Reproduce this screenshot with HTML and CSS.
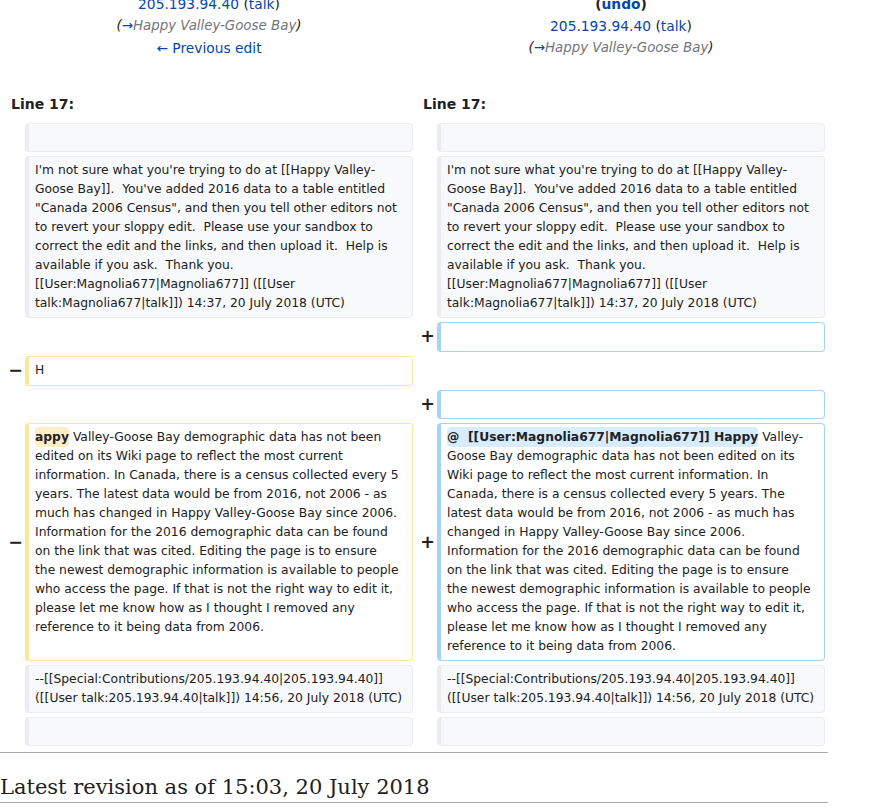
FILE: index.html
```html
<!DOCTYPE html>
<html lang="en">
<head>
<meta charset="utf-8">
<title>Diff</title>
<link rel="stylesheet" href="styles.css">
</head>
<body>
<div class="page">
  <div class="diff">
    <div class="title">
      <div class="tline"><strong><a class="lnk">Revision as of 14:56, 20 July 2018</a> (<a class="lnk">edit</a>)</strong></div>
      <div class="tline"><a class="lnk">205.193.94.40</a> (<a class="lnk">talk</a>)</div>
      <div class="tline comment">(<a class="lnk">→</a><span class="auto">Happy Valley-Goose Bay</span>)</div>
      <div class="tline"><a class="lnk">← Previous edit</a></div>
    </div>
    <div class="title">
      <div class="tline"><strong><a class="lnk">Latest revision as of 15:03, 20 July 2018</a> (<a class="lnk">edit</a>)</strong></div>
      <div class="tline"><strong>(<a class="lnk">undo</a>)</strong></div>
      <div class="tline"><a class="lnk">205.193.94.40</a> (<a class="lnk">talk</a>)</div>
      <div class="tline comment">(<a class="lnk">→</a><span class="auto">Happy Valley-Goose Bay</span>)</div>
      <div class="tline">&nbsp;</div>
    </div>

    <div class="lineno">Line 17:</div>
    <div class="lineno">Line 17:</div>

    <div class="marker"></div>
    <div class="cell ctx"><br></div>
    <div class="marker"></div>
    <div class="cell ctx"><br></div>

    <div class="marker"></div>
    <div class="cell ctx">I'm not sure what you're trying to do at [[Happy Valley-Goose Bay]].  You've added 2016 data to a table entitled "Canada 2006 Census", and then you tell other editors not to revert your sloppy edit.  Please use your sandbox to correct the edit and the links, and then upload it.  Help is available if you ask.  Thank you. [[User:Magnolia677|Magnolia677]] ([[User talk:Magnolia677|talk]]) 14:37, 20 July 2018 (UTC)</div>
    <div class="marker"></div>
    <div class="cell ctx">I'm not sure what you're trying to do at [[Happy Valley-Goose Bay]].  You've added 2016 data to a table entitled "Canada 2006 Census", and then you tell other editors not to revert your sloppy edit.  Please use your sandbox to correct the edit and the links, and then upload it.  Help is available if you ask.  Thank you. [[User:Magnolia677|Magnolia677]] ([[User talk:Magnolia677|talk]]) 14:37, 20 July 2018 (UTC)</div>

    <div class="marker"></div>
    <div class="empty"></div>
    <div class="marker">+</div>
    <div class="cell add"><br></div>

    <div class="marker">−</div>
    <div class="cell del">H</div>
    <div class="marker"></div>
    <div class="empty"></div>

    <div class="marker"></div>
    <div class="empty"></div>
    <div class="marker">+</div>
    <div class="cell add"><br></div>

    <div class="marker">−</div>
    <div class="cell del"><del class="chg">appy</del> Valley-Goose Bay demographic data has not been
edited on its Wiki page to reflect the most current
information. In Canada, there is a census collected every 5
years. The latest data would be from 2016, not 2006 - as
much has changed in Happy Valley-Goose Bay since 2006.
Information for the 2016 demographic data can be found
on the link that was cited. Editing the page is to ensure
the newest demographic information is available to people
who access the page. If that is not the right way to edit it,
please let me know how as I thought I removed any
reference to it being data from 2006.</div>
    <div class="marker">+</div>
    <div class="cell add"><ins class="chg">@  [[User:Magnolia677|Magnolia677]] Happy</ins> Valley-
Goose Bay demographic data has not been edited on its
Wiki page to reflect the most current information. In
Canada, there is a census collected every 5 years. The
latest data would be from 2016, not 2006 - as much has
changed in Happy Valley-Goose Bay since 2006.
Information for the 2016 demographic data can be found
on the link that was cited. Editing the page is to ensure
the newest demographic information is available to people
who access the page. If that is not the right way to edit it,
please let me know how as I thought I removed any
reference to it being data from 2006.</div>

    <div class="marker"></div>
    <div class="cell ctx">--[[Special:Contributions/205.193.94.40|205.193.94.40]] ([[User talk:205.193.94.40|talk]]) 14:56, 20 July 2018 (UTC)</div>
    <div class="marker"></div>
    <div class="cell ctx">--[[Special:Contributions/205.193.94.40|205.193.94.40]] ([[User talk:205.193.94.40|talk]]) 14:56, 20 July 2018 (UTC)</div>

    <div class="marker"></div>
    <div class="cell ctx"><br></div>
    <div class="marker"></div>
    <div class="cell ctx"><br></div>
  </div>
  <hr class="diff-hr">
  <h2 class="current-title">Latest revision as of 15:03, 20 July 2018</h2>
</div>
</body>
</html>
```

FILE: styles.css
```css
* {
  box-sizing: border-box;
}

body {
  margin: 0;
  background: #ffffff;
  color: #202122;
  font-family: "DejaVu Sans", sans-serif;
  font-size: 14px;
}

.page {
  width: 828px;
}

.diff {
  display: grid;
  grid-template-columns: 16px 388px 16px 388px;
  gap: 4px;
  padding: 4px;
  margin: -37px 0 0 1px;
}

.title {
  grid-column: span 2;
  text-align: center;
  padding: 4px 7px;
  line-height: 22px;
  font-size: 13.8px;
}

.lnk {
  color: #0645ad;
  text-decoration: none;
}

.comment {
  font-style: italic;
  font-size: 13.4px;
}

.auto {
  color: #72777d;
}

.lineno {
  grid-column: span 2;
  font-weight: bold;
  padding: 4px 6px;
  line-height: 22px;
}

.marker {
  display: flex;
  align-items: center;
  justify-content: flex-end;
  padding: 4.4px 0;
  font-weight: bold;
  font-size: 17.5px;
  line-height: 1.2;
  margin-right: -2px;
}

.cell {
  font-size: 12.32px;
  line-height: 19px;
  padding: 4px 4px 4px 6px;
  border-style: solid;
  border-width: 1px 1px 1px 4px;
  border-radius: 4px;
  white-space: pre-wrap;
  overflow-wrap: break-word;
}

.ctx {
  background: #f8f9fa;
  border-color: #eaecf0;
  padding-right: 6px;
}

.add {
  background: #ffffff;
  border-color: #a3d3ff;
}

.del {
  background: #ffffff;
  border-color: #ffe49c;
}

.chg {
  font-weight: bold;
  text-decoration: none;
  border-radius: 4px;
  padding: 3px 0;
}

.del .chg {
  background: #feeec8;
}

.add .chg {
  background: #d8ecff;
}

.diff-hr {
  height: 1px;
  background: #a2a9b1;
  border: 0;
  margin: 2px 0 0;
}

.current-title {
  font-family: "DejaVu Serif", serif;
  font-size: 21px;
  font-weight: normal;
  line-height: 1.3;
  margin: 21px 0 0;
  padding: 0;
  border-bottom: 1px solid #a2a9b1;
}
```
